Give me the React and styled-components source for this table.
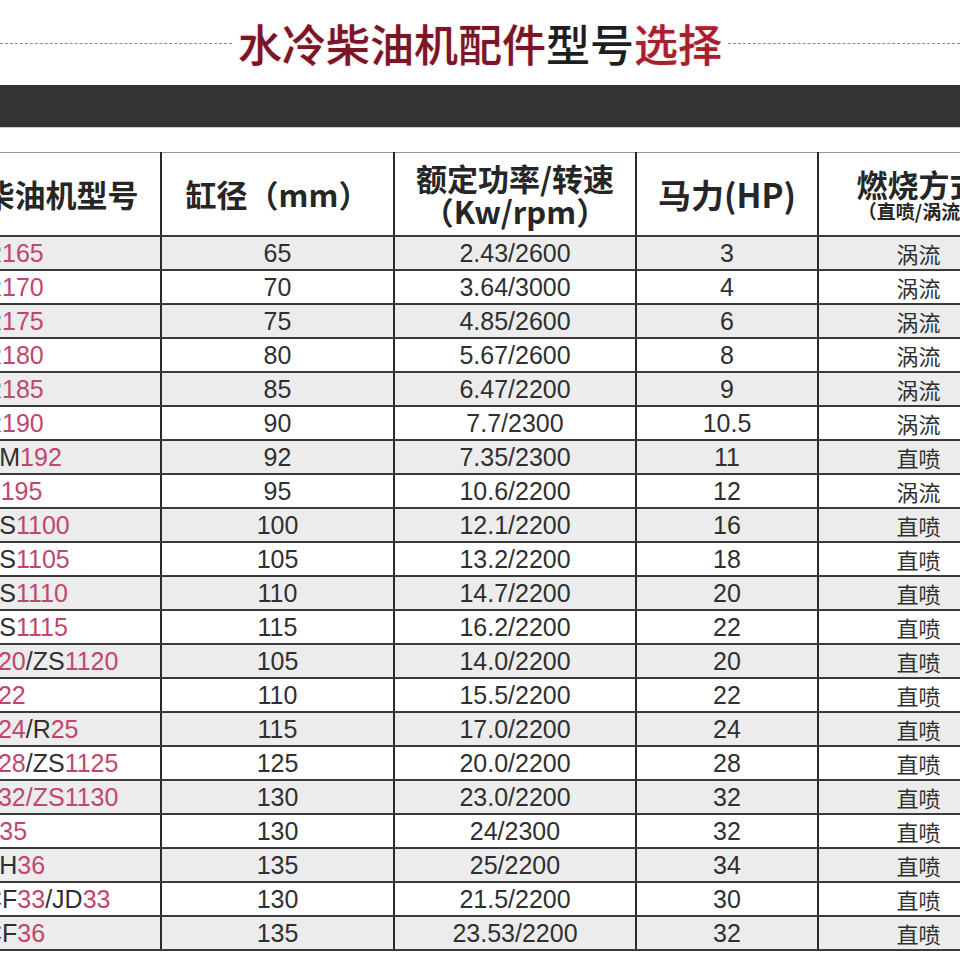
import React from 'react';
import styled, { createGlobalStyle } from 'styled-components';

const GlobalStyle = createGlobalStyle`
  html, body {
    margin: 0;
    padding: 0;
    background: #fff;
  }
  body {
    width: 960px;
    overflow: hidden;
    font-family: "Liberation Sans", "Noto Sans CJK SC", sans-serif;
  }
`;

const cjk = `"Noto Sans CJK SC", "Noto Sans", sans-serif`;

const rows = [
  ['R165', '65', '2.43/2600', '3', '涡流'],
  ['R170', '70', '3.64/3000', '4', '涡流'],
  ['R175', '75', '4.85/2600', '6', '涡流'],
  ['R180', '80', '5.67/2600', '8', '涡流'],
  ['R185', '85', '6.47/2200', '9', '涡流'],
  ['R190', '90', '7.7/2300', '10.5', '涡流'],
  ['ZM192', '92', '7.35/2300', '11', '直喷'],
  ['S195', '95', '10.6/2200', '12', '涡流'],
  ['ZS1100', '100', '12.1/2200', '16', '直喷'],
  ['ZS1105', '105', '13.2/2200', '18', '直喷'],
  ['ZS1110', '110', '14.7/2200', '20', '直喷'],
  ['ZS1115', '115', '16.2/2200', '22', '直喷'],
  ['120/ZS1120', '105', '14.0/2200', '20', '直喷'],
  ['122', '110', '15.5/2200', '22', '直喷'],
  ['124/R25', '115', '17.0/2200', '24', '直喷'],
  ['128/ZS1125', '125', '20.0/2200', '28', '直喷'],
  ['132/ZS1130', '130', '23.0/2200', '32', '直喷', true],
  ['Z35', '130', '24/2300', '32', '直喷'],
  ['ZH36', '135', '25/2200', '34', '直喷'],
  ['CF33/JD33', '130', '21.5/2200', '30', '直喷'],
  ['CF36', '135', '23.53/2200', '32', '直喷'],
];

// digits of the model name are printed in pink, letters in dark grey
function Model({ name, allPink }) {
  const parts = name.split(/(\d+)/).filter(Boolean);
  return parts.map((p, i) => (
    <Part key={i} pink={allPink || /^\d+$/.test(p)}>{p}</Part>
  ));
}

export default function App() {
  return (
    <Page>
      <GlobalStyle />
      <TitleRow>
        <Dashes />
        <Title>
          <TitleText tone="dark">水冷柴油机配件</TitleText>
          <TitleText tone="black">型号</TitleText>
          <TitleText tone="red">选择</TitleText>
        </Title>
        <Dashes />
      </TitleRow>
      <Bar />
      <TableClip>
        <Table>
          <colgroup>
            <col style={{ width: 200 }} />
            <col style={{ width: 233 }} />
            <col style={{ width: 242 }} />
            <col style={{ width: 182 }} />
            <col style={{ width: 200 }} />
          </colgroup>
          <thead>
            <tr>
              <Head>柴油机型号</Head>
              <Head>缸径（mm）</Head>
              <Head tight>
                额定功率/转速
                <br />
                （Kw/rpm）
              </Head>
              <Head big>马力(HP)</Head>
              <Head tight>
                燃烧方式
                <Sub>（直喷/涡流）</Sub>
              </Head>
            </tr>
          </thead>
          <tbody>
            {rows.map((r, i) => (
              <Row key={i} striped={i % 2 === 0}>
                <ModelCell>
                  <Model name={r[0]} allPink={r[5]} />
                </ModelCell>
                <Cell>{r[1]}</Cell>
                <Cell>{r[2]}</Cell>
                <Cell>{r[3]}</Cell>
                <CjkCell>{r[4]}</CjkCell>
              </Row>
            ))}
          </tbody>
        </Table>
      </TableClip>
    </Page>
  );
}

const Page = styled.div`
  width: 960px;
  height: 960px;
  overflow: hidden;
  background: #fff;
`;

const TitleRow = styled.div`
  height: 85px;
  display: flex;
  align-items: center;
  gap: 6px;
`;

const Dashes = styled.div`
  flex: 1;
  height: 0;
  border-top: 1px dashed #8a8a8a;
  margin-top: 2px;
`;

const Title = styled.h1`
  margin: 0;
  font-family: ${cjk};
  font-size: 44px;
  font-weight: 500;
  line-height: 1;
  white-space: nowrap;
`;

const titleColors = {
  dark: '#7a1626',
  black: '#1e1e1e',
  red: '#a8202e',
};

const TitleText = styled.span`
  color: ${props => titleColors[props.tone]};
  text-shadow: 0 0 2px rgba(220, 60, 80, ${props => (props.tone === 'black' ? 0 : 0.35)});
`;

const Bar = styled.div`
  height: 42px;
  background: #333;
  border-bottom: 1px solid #cfcfcf;
`;

const TableClip = styled.div`
  margin-top: 24px;
  overflow: hidden;
`;

const Table = styled.table`
  margin-left: -40px;
  width: 1057px;
  table-layout: fixed;
  border-collapse: collapse;
  border-top: 1px solid #9a9a9a;
`;

const Head = styled.th`
  height: 82px;
  padding: 0;
  font-family: ${cjk};
  font-size: ${props => (props.big ? '33px' : '31px')};
  font-weight: 700;
  line-height: ${props => (props.tight ? '33px' : '36px')};
  color: #262626;
  text-align: center;
  vertical-align: middle;
  border-left: 2px solid #2a2a2a;
  border-bottom: 2px solid #3a3a3a;
  white-space: nowrap;
`;

const Sub = styled.div`
  font-size: 19px;
  line-height: 22px;
  font-weight: 700;
`;

const Row = styled.tr`
  background: ${props => (props.striped ? '#ececec' : '#fff')};
`;

const Cell = styled.td`
  height: 32px;
  padding: 0;
  font-size: 25px;
  line-height: 32px;
  color: #2f2f2f;
  text-align: center;
  border-left: 2px solid #2a2a2a;
  border-bottom: 2px solid #3a3a3a;
  white-space: nowrap;
`;

const ModelCell = styled(Cell)`
  text-align: left;
  padding-left: 22px;
`;

const CjkCell = styled(Cell)`
  font-family: ${cjk};
  font-size: 22px;
`;

const Part = styled.span`
  color: ${props => (props.pink ? '#c0466c' : '#2f2f2f')};
`;
